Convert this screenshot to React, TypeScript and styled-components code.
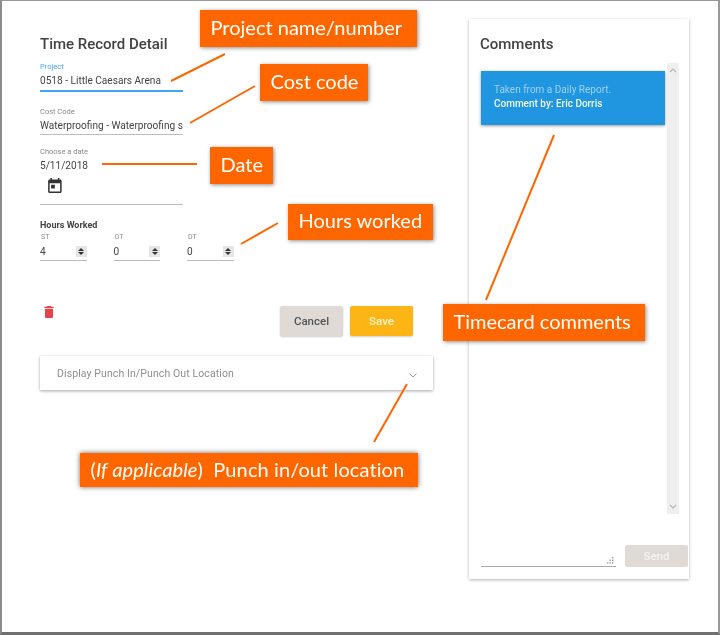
import React from "react";
import styled, { createGlobalStyle } from "styled-components";

const ORANGE = "#ff6600";

const callouts = [
  { text: "Project name/number", x: 200, y: 10, w: 217, h: 37 },
  { text: "Cost code", x: 260, y: 64, w: 108, h: 37 },
  { text: "Date", x: 210, y: 147, w: 63, h: 37 },
  { text: "Hours worked", x: 288, y: 204, w: 145, h: 36 },
  { text: "Timecard comments", x: 443, y: 304, w: 202, h: 37 },
];

const leaders = [
  [171, 81, 225, 54],
  [190, 123, 255, 86],
  [102, 164, 197, 164],
  [241, 244, 278, 223],
  [486, 300, 554, 135],
  [374, 442, 407, 384],
];

export default function App() {
  return (
    <Page>
      <GlobalStyle />
      <FormColumn>
        <Title>Time Record Detail</Title>
        <Field $top={8} $active>
          <FieldLabel $active>Project</FieldLabel>
          <FieldValue>0518 - Little Caesars Arena</FieldValue>
        </Field>
        <Field $top={14}>
          <FieldLabel>Cost Code</FieldLabel>
          <FieldValue>Waterproofing - Waterproofing services</FieldValue>
        </Field>
        <Field $top={11}>
          <FieldLabel>Choose a date</FieldLabel>
          <FieldValue>5/11/2018</FieldValue>
          <DateToggle>
            <svg width="18" height="18" viewBox="0 0 24 24" fill="#333">
              <path d="M19 3h-1V1h-2v2H8V1H6v2H5c-1.11 0-1.99.9-1.99 2L3 19c0 1.1.89 2 2 2h14c1.1 0 2-.9 2-2V5c0-1.1-.9-2-2-2zm0 16H5V8h14v11zM7 10h5v5H7z" transform="translate(2.5 1.5)" />
            </svg>
          </DateToggle>
        </Field>
        <HoursHeading>Hours Worked</HoursHeading>
        <HoursRow>
          {[
            ["ST", "4"],
            ["OT", "0"],
            ["DT", "0"],
          ].map(([label, value]) => (
            <HoursField key={label}>
              <HoursLabel>{label}</HoursLabel>
              <HoursInput>
                <FieldValue>{value}</FieldValue>
                <Spinner>
                  <SpinUp />
                  <SpinDown />
                </Spinner>
              </HoursInput>
            </HoursField>
          ))}
        </HoursRow>
        <ActionRow>
          <TrashButton>
            <svg width="16" height="16" viewBox="0 0 24 24" fill="#e8414a">
              <path d="M6 19c0 1.1.9 2 2 2h8c1.1 0 2-.9 2-2V7H6v12zM19 4h-3.5l-1-1h-5l-1 1H5v2h14V4z" />
            </svg>
          </TrashButton>
          <Buttons>
            <Button>Cancel</Button>
            <Button $primary>Save</Button>
          </Buttons>
        </ActionRow>
        <Accordion>
          <AccordionText>Display Punch In/Punch Out Location</AccordionText>
          <AccordionChevron width="8" height="5" viewBox="0 0 8 5" fill="none" stroke="#999" strokeWidth="1">
            <path d="M.5.5L4 4 7.5.5" />
          </AccordionChevron>
        </Accordion>
      </FormColumn>

      <CommentsCard>
        <Title>Comments</Title>
        <CommentList>
          <CommentArea>
            <CommentItem>
              <CommentText>Taken from a Daily Report.</CommentText>
              <CommentAuthor>Comment by: Eric Dorris</CommentAuthor>
            </CommentItem>
          </CommentArea>
          <ScrollTrack>
            <svg width="8" height="5" viewBox="0 0 8 5" fill="none" stroke="#b5b5b5" strokeWidth="1.2">
              <path d="M1 4l3-3 3 3" />
            </svg>
            <svg width="8" height="5" viewBox="0 0 8 5" fill="none" stroke="#b5b5b5" strokeWidth="1.2">
              <path d="M1 1l3 3 3-3" />
            </svg>
          </ScrollTrack>
        </CommentList>
        <Composer>
          <CommentInput>
            <svg width="7" height="7" viewBox="0 0 7 7" fill="#999">
              <rect x="5" y="0" width="1.4" height="1.4" />
              <rect x="5" y="2.6" width="1.4" height="1.4" />
              <rect x="2.5" y="2.6" width="1.4" height="1.4" />
              <rect x="5" y="5.2" width="1.4" height="1.4" />
              <rect x="2.5" y="5.2" width="1.4" height="1.4" />
              <rect x="0" y="5.2" width="1.4" height="1.4" />
            </svg>
          </CommentInput>
          <SendButton>Send</SendButton>
        </Composer>
      </CommentsCard>

      <LeaderLines width="720" height="635" viewBox="0 0 720 635">
        {leaders.map(([x1, y1, x2, y2]) => (
          <line key={`${x1}-${y1}`} x1={x1} y1={y1} x2={x2} y2={y2} stroke={ORANGE} strokeWidth="2" />
        ))}
      </LeaderLines>
      {callouts.map((c) => (
        <Callout key={c.text} $x={c.x} $y={c.y} $w={c.w} $h={c.h}>
          {c.text}
        </Callout>
      ))}
      <Callout $x={80} $y={453} $w={338} $h={34} $wide>
        (<em>If applicable</em>)&nbsp; Punch in/out location
      </Callout>
    </Page>
  );
}

const GlobalStyle = createGlobalStyle`
  html, body {
    margin: 0;
    padding: 0;
    background: #fff;
  }
`;

const Page = styled.div`
  position: relative;
  box-sizing: border-box;
  width: 720px;
  height: 635px;
  display: flex;
  align-items: flex-start;
  background: #fff;
  border-top: 1px solid #999;
  border-left: 2px solid #8c8c8c;
  border-right: 2px solid #9a9a9a;
  border-bottom: 3px solid #707070;
  font-family: Roboto, "Liberation Sans", sans-serif;
  color: #444;
  overflow: hidden;
  filter: blur(0.45px);
`;

const FormColumn = styled.div`
  width: 393px;
  margin-left: 38px;
  padding-top: 35px;
  display: flex;
  flex-direction: column;
`;

const Title = styled.div`
  font-size: 15px;
  font-weight: 500;
  line-height: 17px;
  color: #424242;
`;

const Field = styled.div<{ $top: number; $active?: boolean }>`
  width: 143px;
  margin-top: ${(p) => p.$top}px;
  padding: 1px 0 ${(p) => (p.$active ? 1 : 0)}px;
  border-bottom: ${(p) => (p.$active ? "2px solid #42a5f5" : "1px solid #bdbdbd")};
  overflow: hidden;
`;

const FieldLabel = styled.div<{ $active?: boolean }>`
  font-size: 7.5px;
  line-height: 10px;
  color: ${(p) => (p.$active ? "#42a5f5" : "#8a8a8a")};
`;

const FieldValue = styled.div`
  font-size: 10.1px;
  line-height: 17px;
  color: #444;
  white-space: nowrap;
`;

const DateToggle = styled.div`
  height: 30px;
  padding: 2px 0 0 4px;
  box-sizing: border-box;
  svg {
    display: block;
  }
`;

const HoursHeading = styled.div`
  margin-top: 15px;
  font-size: 9px;
  font-weight: 700;
  line-height: 10px;
  color: #444;
`;

const HoursRow = styled.div`
  display: flex;
  gap: 27px;
  margin-top: 2px;
`;

const HoursField = styled.div`
  width: 46.5px;
`;

const HoursLabel = styled.div`
  font-size: 7px;
  line-height: 10px;
  padding-left: 1px;
  color: #8a8a8a;
`;

const HoursInput = styled.div`
  display: flex;
  align-items: center;
  justify-content: space-between;
  height: 18px;
  border-bottom: 1px solid #bdbdbd;
`;

const Spinner = styled.div`
  width: 11px;
  height: 11px;
  background: #e6e6e6;
  display: flex;
  flex-direction: column;
  align-items: center;
  justify-content: center;
  gap: 1px;
`;

const SpinUp = styled.span`
  border-left: 3px solid transparent;
  border-right: 3px solid transparent;
  border-bottom: 3px solid #333;
`;

const SpinDown = styled.span`
  border-left: 3px solid transparent;
  border-right: 3px solid transparent;
  border-top: 3px solid #333;
`;

const ActionRow = styled.div`
  display: flex;
  justify-content: space-between;
  align-items: flex-start;
  margin-top: 43px;
  padding-right: 20px;
  height: 32px;
`;

const TrashButton = styled.div`
  margin-left: 1px;
  svg {
    display: block;
  }
`;

const Buttons = styled.div`
  display: flex;
  gap: 7px;
  margin-top: 2px;
`;

const Button = styled.div<{ $primary?: boolean }>`
  width: 63px;
  height: 30px;
  border-radius: 2px;
  display: flex;
  align-items: center;
  justify-content: center;
  font-size: 11.5px;
  font-weight: 500;
  background: ${(p) => (p.$primary ? "#fdb515" : "#dfdad6")};
  color: ${(p) => (p.$primary ? "#fff3d0" : "#555")};
  box-shadow: 0 1px 2px rgba(0, 0, 0, 0.2);
`;

const Accordion = styled.div`
  margin-top: 20px;
  height: 34px;
  padding: 0 16px 0 17px;
  display: flex;
  align-items: center;
  justify-content: space-between;
  background: #fff;
  box-shadow: 0 1px 3px rgba(0, 0, 0, 0.35);
`;

const AccordionText = styled.div`
  font-size: 10.5px;
  font-weight: 400;
  color: #8f8f8f;
  letter-spacing: 0.1px;
`;

const AccordionChevron = styled.svg`
  margin-top: 4px;
`;

const CommentsCard = styled.div`
  box-sizing: border-box;
  width: 220px;
  height: 560px;
  margin: 18px 0 0 36px;
  padding: 17px 1px 12px 11px;
  display: flex;
  flex-direction: column;
  background: #fff;
  box-shadow: 0 1px 3px rgba(0, 0, 0, 0.3);
`;

const CommentList = styled.div`
  height: 451px;
  margin: 10px 0 0 1px;
  display: flex;
`;

const CommentArea = styled.div`
  width: 184px;
  padding-top: 8px;
`;

const CommentItem = styled.div`
  box-sizing: border-box;
  height: 54px;
  padding: 12px 13px;
  background: #2196e0;
  box-shadow: 0 1px 3px rgba(0, 0, 0, 0.4);
  font-size: 10px;
  line-height: 14px;
`;

const CommentText = styled.div`
  color: #9ed0f2;
`;

const CommentAuthor = styled.div`
  color: #f2f8fd;
  font-weight: 500;
`;

const ScrollTrack = styled.div`
  width: 12.5px;
  margin-left: 1.5px;
  box-sizing: border-box;
  padding: 5px 0;
  background: #efefef;
  display: flex;
  flex-direction: column;
  align-items: center;
  justify-content: space-between;
`;

const Composer = styled.div`
  margin: 31px 0 0 1px;
  display: flex;
  align-items: flex-start;
  gap: 9px;
`;

const CommentInput = styled.div`
  box-sizing: border-box;
  width: 135px;
  height: 22px;
  border-bottom: 1px solid #aaa;
  display: flex;
  align-items: flex-end;
  justify-content: flex-end;
  padding: 0 2px 2px 0;
`;

const SendButton = styled.div`
  width: 63px;
  height: 22px;
  border-radius: 2px;
  display: flex;
  align-items: center;
  justify-content: center;
  background: #dfdad6;
  color: #f5f3f1;
  font-size: 11.5px;
  font-weight: 500;
`;

const LeaderLines = styled.svg`
  position: absolute;
  left: -2px;
  top: -1px;
  pointer-events: none;
`;

const Callout = styled.div<{ $x: number; $y: number; $w: number; $h: number; $wide?: boolean }>`
  position: absolute;
  left: ${(p) => p.$x - 2}px;
  top: ${(p) => p.$y - 1}px;
  box-sizing: border-box;
  width: ${(p) => p.$w}px;
  height: ${(p) => p.$h}px;
  padding: 0 0 ${(p) => (p.$wide ? 2 : 3.5)}px 10.5px;
  display: flex;
  align-items: center;
  white-space: pre;
  background: ${ORANGE};
  color: #fff;
  font-family: Lato, "Open Sans", sans-serif;
  font-size: 20px;
  letter-spacing: ${(p) => (p.$wide ? 0.1 : 0)}px;
  box-shadow: ${(p) => (p.$wide ? "0 0 5px rgba(0, 0, 0, 0.6)" : "1px 1px 4px rgba(0, 0, 0, 0.45)")};
`;
